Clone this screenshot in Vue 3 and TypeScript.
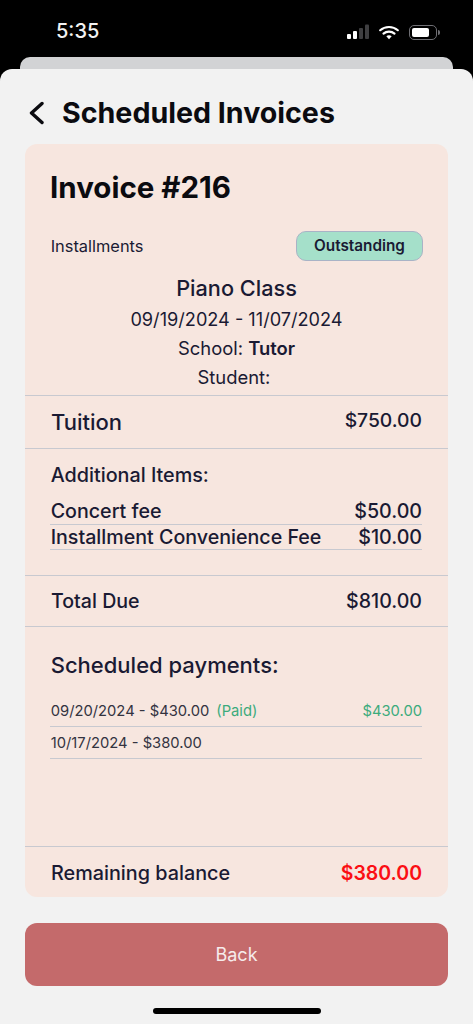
<script setup lang="ts">
interface Fee { label: string; amount: string }
const fees: Fee[] = [
  { label: 'Concert fee', amount: '$50.00' },
  { label: 'Installment Convenience Fee', amount: '$10.00' },
]
</script>

<template>
  <div class="screen">
    <div class="status">
      <span class="time">5:35</span>
      <div class="status-icons">
        <svg width="26" height="16" viewBox="0 0 26 16" class="signal">
          <rect x="3" y="10" width="4" height="5" rx="1" fill="#fff" />
          <rect x="9" y="7" width="4" height="8" rx="1" fill="#fff" />
          <rect x="15" y="4" width="4" height="11" rx="1" fill="#3f3f41" />
          <rect x="21" y="0.5" width="4" height="14.5" rx="1" fill="#3f3f41" />
        </svg>
        <svg width="20" height="15" viewBox="0 0 20 15" class="wifi">
          <path d="M1.2 5.2C6 .9 14 .9 18.8 5.2" fill="none" stroke="#fff" stroke-width="2.2" stroke-linecap="round" />
          <path d="M4.5 8.6c3-2.6 8-2.6 11 0" fill="none" stroke="#fff" stroke-width="2.2" stroke-linecap="round" />
          <path d="M7.3 11.2c1.6-1.2 3.8-1.2 5.4 0L10 14.2z" fill="#fff" />
        </svg>
        <div class="battery"><div class="battery-fill"></div></div>
        <div class="battery-tip"></div>
      </div>
    </div>
    <div class="sheet-back"></div>
    <div class="sheet">
      <header class="nav">
        <svg width="16" height="26" viewBox="0 0 16 26" class="chevron">
          <path d="M14 3.5 3.5 13 14 22.5" fill="none" stroke="#0b0b10" stroke-width="3.4" stroke-linecap="round" stroke-linejoin="round" />
        </svg>
        <h1>Scheduled Invoices</h1>
      </header>

      <section class="card">
        <div class="intro">
          <h2>Invoice #216</h2>
          <div class="type-row">
            <span>Installments</span>
            <span class="badge">Outstanding</span>
          </div>
          <div class="class-name">Piano Class</div>
          <div class="dates">09/19/2024 - 11/07/2024</div>
          <div class="meta">School: <b>Tutor</b></div>
          <div class="meta">Student:&nbsp;</div>
        </div>

        <div class="tuition row">
          <span class="tuition-label">Tuition</span>
          <span class="tuition-amount">$750.00</span>
        </div>

        <div class="additional">
          <div class="additional-title">Additional Items:</div>
          <div v-for="fee in fees" :key="fee.label" class="fee">
            <span>{{ fee.label }}</span>
            <span>{{ fee.amount }}</span>
          </div>
        </div>

        <div class="total row">
          <span>Total Due</span>
          <span>$810.00</span>
        </div>

        <div class="payments">
          <div class="payments-title">Scheduled payments:</div>
          <div class="payment">
            <span>09/20/2024 - $430.00<span class="paid">(Paid)</span></span>
            <span class="paid-amount">$430.00</span>
          </div>
          <div class="payment">
            <span>10/17/2024 - $380.00</span>
          </div>
        </div>

        <div class="remaining row">
          <span>Remaining balance</span>
          <span class="remaining-amount">$380.00</span>
        </div>
      </section>

      <button class="back" type="button">Back</button>
      <div class="home"></div>
    </div>
  </div>
</template>

<style>
html, body { margin: 0; background: #000; }
</style>

<style scoped>
.screen {
  position: relative;
  width: 473px;
  height: 1024px;
  overflow: hidden;
  background: #000;
  font-family: Inter, "Liberation Sans", sans-serif;
  color: #1a1a33;
}
.status {
  height: 57px;
  position: relative;
  color: #fff;
}
.time {
  position: absolute;
  left: 56px;
  top: 20px;
  font-size: 20px;
  line-height: 23px;
  font-weight: 500;
  color: #f2f2f2;
}
.status-icons {
  position: absolute;
  left: 344px;
  top: 24px;
  display: flex;
  align-items: center;
}
.signal { margin-right: 9px; }
.wifi { margin-right: 10px; }
.battery {
  width: 28px;
  height: 15px;
  box-sizing: border-box;
  border: 1px solid #6f6f74;
  border-radius: 5px;
  padding: 2px;
}
.battery-fill {
  width: 17px;
  height: 9px;
  background: #fff;
  border-radius: 2px;
}
.battery-tip {
  width: 2px;
  height: 5px;
  margin-left: 1px;
  background: #6f6f74;
  border-radius: 0 2px 2px 0;
}
.sheet-back {
  height: 24px;
  margin: 0 20px;
  background: #d2d3d5;
  border-radius: 10px 10px 0 0;
}
.sheet {
  position: absolute;
  left: 0;
  right: 0;
  top: 69px;
  bottom: 0;
  background: #f2f2f2;
  border-radius: 12px 12px 0 0;
  padding: 0 25px;
}
.nav {
  height: 75px;
  box-sizing: border-box;
  padding-top: 13px;
  display: flex;
  align-items: center;
}
.chevron { margin: 0 18px 0 3px; flex: none; }
h1 {
  margin: 0;
  font-size: 28.6px;
  line-height: 34px;
  font-weight: 700;
  color: #0b0b10;
}
.card {
  height: 753px;
  background: #f7e6df;
  border-radius: 12px;
  display: flex;
  flex-direction: column;
  overflow: hidden;
}
.intro {
  height: 252px;
  box-sizing: border-box;
  padding: 0 25px;
  border-bottom: 1px solid #c8c9d0;
  text-align: center;
}
h2 {
  margin: 0;
  height: 87px;
  font-size: 29.5px;
  line-height: 87px;
  font-weight: 700;
  text-align: left;
  color: #0b0b10;
}
.type-row {
  display: flex;
  justify-content: space-between;
  align-items: center;
  height: 30px;
  padding-left: 0.7px;
  font-size: 16.4px;
  text-align: left;
}
.badge {
  width: 127px;
  height: 30px;
  box-sizing: border-box;
  border: 1px solid #a9b3c6;
  border-radius: 10px;
  background: #a5e0ca;
  font-size: 15.3px;
  line-height: 28px;
  font-weight: 600;
  text-align: center;
}
.class-name {
  margin-top: 11px;
  font-size: 21.7px;
  line-height: 32px;
  font-weight: 500;
}
.dates {
  font-size: 18.15px;
  line-height: 30px;
}
.meta {
  font-size: 18.4px;
  line-height: 29px;
}
.meta b { font-weight: 600; }
.row {
  display: flex;
  justify-content: space-between;
  align-items: center;
  box-sizing: border-box;
  padding: 0 26px;
}
.tuition {
  height: 53px;
  border-bottom: 1px solid #c8c9d0;
}
.tuition-label {
  font-size: 22px;
  font-weight: 500;
}
.tuition-amount {
  font-size: 19.3px;
  font-weight: 500;
  margin-top: -4px;
}
.additional {
  height: 127px;
  box-sizing: border-box;
  padding: 13px 26px 0 25px;
  border-bottom: 1px solid #c8c9d0;
}
.additional-title {
  padding-left: 0.7px;
  font-size: 19.75px;
  line-height: 26px;
  font-weight: 500;
  margin-bottom: 11px;
}
.fee {
  display: flex;
  justify-content: space-between;
  height: 26px;
  box-sizing: border-box;
  padding-left: 0.7px;
  font-size: 19.65px;
  line-height: 25px;
  font-weight: 500;
  border-bottom: 1px solid #c8c9d0;
}
.fee:last-child { height: 25px; }
.total {
  height: 51px;
  border-bottom: 1px solid #c8c9d0;
  font-size: 19.6px;
  font-weight: 500;
}
.payments {
  flex: 1;
  box-sizing: border-box;
  padding: 0 26px 0 25px;
  border-bottom: 1px solid #c8c9d0;
}
.payments-title {
  padding-left: 0.7px;
  font-size: 22px;
  line-height: 26px;
  font-weight: 500;
  margin: 25px 0 17px;
}
.payment {
  display: flex;
  justify-content: space-between;
  height: 32px;
  box-sizing: border-box;
  padding-left: 0.7px;
  font-size: 14.75px;
  line-height: 32px;
  color: #33333f;
  border-bottom: 1px solid #c8c9d0;
}
.paid { color: #3cab7c; margin-left: 7px; }
.paid-amount { color: #3cab7c; }
.remaining {
  height: 50px;
  padding-top: 2px;
  font-size: 19.8px;
  font-weight: 500;
}
.remaining-amount {
  color: #fb0f14;
  font-weight: 600;
  font-size: 19.5px;
}
.back {
  display: block;
  width: 100%;
  height: 63px;
  margin-top: 26px;
  border: 0;
  border-radius: 12px;
  background: #c46a6b;
  color: #f6ecec;
  font-family: inherit;
  font-size: 18px;
}
.home {
  width: 168px;
  height: 6px;
  margin: 22px auto 0;
  background: #000;
  border-radius: 3px;
}
</style>
